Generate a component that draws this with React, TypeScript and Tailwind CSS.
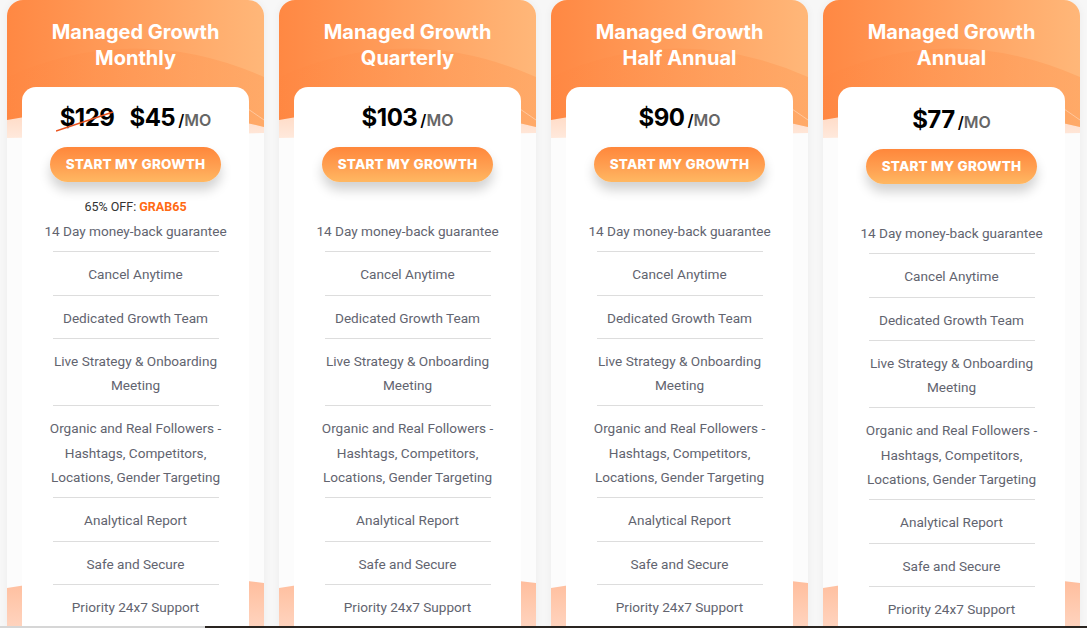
interface Plan {
    name: string;
    price: string;
    oldPrice?: string;
    promo?: string;
    shift?: boolean;
}

const plans: Plan[] = [
    { name: "Monthly", price: "$45", oldPrice: "$129", promo: "GRAB65" },
    { name: "Quarterly", price: "$103" },
    { name: "Half Annual", price: "$90" },
    { name: "Annual", price: "$77", shift: true },
];

// each feature is split into the lines it shows on
const features: string[][] = [
    ["14 Day money-back guarantee"],
    ["Cancel Anytime"],
    ["Dedicated Growth Team"],
    ["Live Strategy & Onboarding", "Meeting"],
    ["Organic and Real Followers -", "Hashtags, Competitors,", "Locations, Gender Targeting"],
    ["Analytical Report"],
    ["Safe and Secure"],
    ["Priority 24x7 Support"],
];

function HeaderArt() {
    return (
        <svg
            className="absolute left-0 top-0 h-[140px] w-full"
            viewBox="0 0 257 140"
            preserveAspectRatio="none"
        >
            <defs>
                <linearGradient id="hdr" x1="0" y1="0" x2="1" y2="0">
                    <stop offset="0" stopColor="#ff8843" />
                    <stop offset="1" stopColor="#ffb779" />
                </linearGradient>
                <linearGradient id="peach" x1="0" y1="0" x2="0" y2="1">
                    <stop offset="0" stopColor="#ffd2b8" />
                    <stop offset="1" stopColor="#ffe9dc" />
                </linearGradient>
                <linearGradient id="arc" x1="0" y1="0" x2="1" y2="0">
                    <stop offset="0" stopColor="#ff7a35" stopOpacity="0.05" />
                    <stop offset="1" stopColor="#ff8a40" stopOpacity="0.3" />
                </linearGradient>
            </defs>
            <path d="M0 100 H257 V133 L0 138 Z" fill="url(#peach)" />
            <path d="M0 0 H257 V127 Q128 95 0 120 Z" fill="url(#hdr)" />
            <path d="M0 77 Q128 20 257 77 V127 Q128 95 0 120 Z" fill="url(#arc)" />
            <path d="M228 100 L257 120" stroke="#ffffff" strokeOpacity="0.35" strokeWidth="1" />
        </svg>
    );
}

function FooterArt() {
    return (
        <svg
            className="absolute left-0 top-[566px] h-[70px] w-full"
            viewBox="0 0 257 70"
            preserveAspectRatio="none"
        >
            <defs>
                <linearGradient id="ftr" x1="0" y1="0" x2="0" y2="1">
                    <stop offset="0" stopColor="#ffb894" />
                    <stop offset="1" stopColor="#ffd8c5" />
                </linearGradient>
            </defs>
            <path d="M0 22 L128 2 L257 17 V70 H0 Z" fill="url(#ftr)" />
        </svg>
    );
}

function PriceRow({ plan }: { plan: Plan }) {
    return (
        <div className="flex h-[32px] items-baseline justify-center font-['Inter',sans-serif] leading-[32px]">
            {plan.oldPrice && (
                <span className="relative mr-[15px] text-[24px] font-bold tracking-[-0.5px] text-black">
                    {plan.oldPrice}
                    <svg className="absolute left-[-4px] top-[9px] h-[21px] w-[58px]" viewBox="0 0 58 21">
                        <path d="M0 20 L57 1" stroke="#e9541f" strokeWidth="1.6" />
                    </svg>
                </span>
            )}
            <span className="text-[24px] font-bold tracking-[-0.5px] text-black">{plan.price}</span>
            <span className="ml-[3px] text-[16px] font-semibold text-black">/</span>
            <span className="text-[16px] font-semibold text-[#666666]">MO</span>
        </div>
    );
}

function PlanCard({ plan }: { plan: Plan }) {
    return (
        <div className="relative w-[257px] shrink-0 overflow-hidden rounded-t-[16px] bg-[#fcfcfc] shadow-[0_0_8px_rgba(0,0,0,0.05)]">
            <HeaderArt />
            <FooterArt />

            <div className="relative flex flex-col">
                <h2 className="pt-[19px] text-center font-['Inter',sans-serif] text-[20px] font-bold leading-[26px] text-white">
                    Managed Growth
                    <br />
                    {plan.name}
                </h2>

                <div
                    className={
                        "mx-[15px] mt-[16px] rounded-[14px] bg-white pb-10 " +
                        (plan.shift ? "pt-[17px]" : "pt-[15px]")
                    }
                >
                    <PriceRow plan={plan} />

                    <div className="mt-[13px] flex justify-center">
                        <button className="h-[35px] w-[171px] rounded-full bg-[linear-gradient(180deg,#ff873b_0%,#ffa253_60%,#ffb862_100%)] font-['Inter',sans-serif] text-[13.5px] font-extrabold tracking-[0.2px] text-white shadow-[0_8px_12px_rgba(0,0,0,0.18)]">
                            START MY GROWTH
                        </button>
                    </div>

                    <div className="mt-[17px] h-[16px] text-center font-['Roboto',sans-serif] text-[12.5px] leading-[16px] text-[#333333]">
                        {plan.promo && (
                            <>
                                65% OFF:{" "}
                                <span className="font-bold text-[#ff6a13]">{plan.promo}</span>
                            </>
                        )}
                    </div>

                    <ul className="mt-[4px] flex flex-col font-['Roboto',sans-serif] text-[13.6px] leading-[24.3px] text-[#62646f]">
                        {features.map((lines, i) => (
                            <li key={i} className="flex flex-col items-center">
                                {i > 0 && <div className="mb-[10px] h-px w-[166px] bg-[#dddddd]" />}
                                {lines.map((line) => (
                                    <span key={line} className="whitespace-nowrap">
                                        {line}
                                    </span>
                                ))}
                                <div className="h-[8px]" />
                            </li>
                        ))}
                    </ul>
                </div>
            </div>
        </div>
    );
}

export default function App() {
    return (
        <div className="flex h-[628px] w-full flex-col overflow-hidden bg-[#f7f7f7]">
            <div className="flex h-[626px] gap-[15px] overflow-hidden px-[7px]">
                {plans.map((plan) => (
                    <PlanCard key={plan.name} plan={plan} />
                ))}
            </div>
            <div className="flex h-[2px]">
                <div className="w-[205px] bg-[#d6d6d6]" />
                <div className="flex-1 bg-[#2a2521]" />
            </div>
        </div>
    );
}
